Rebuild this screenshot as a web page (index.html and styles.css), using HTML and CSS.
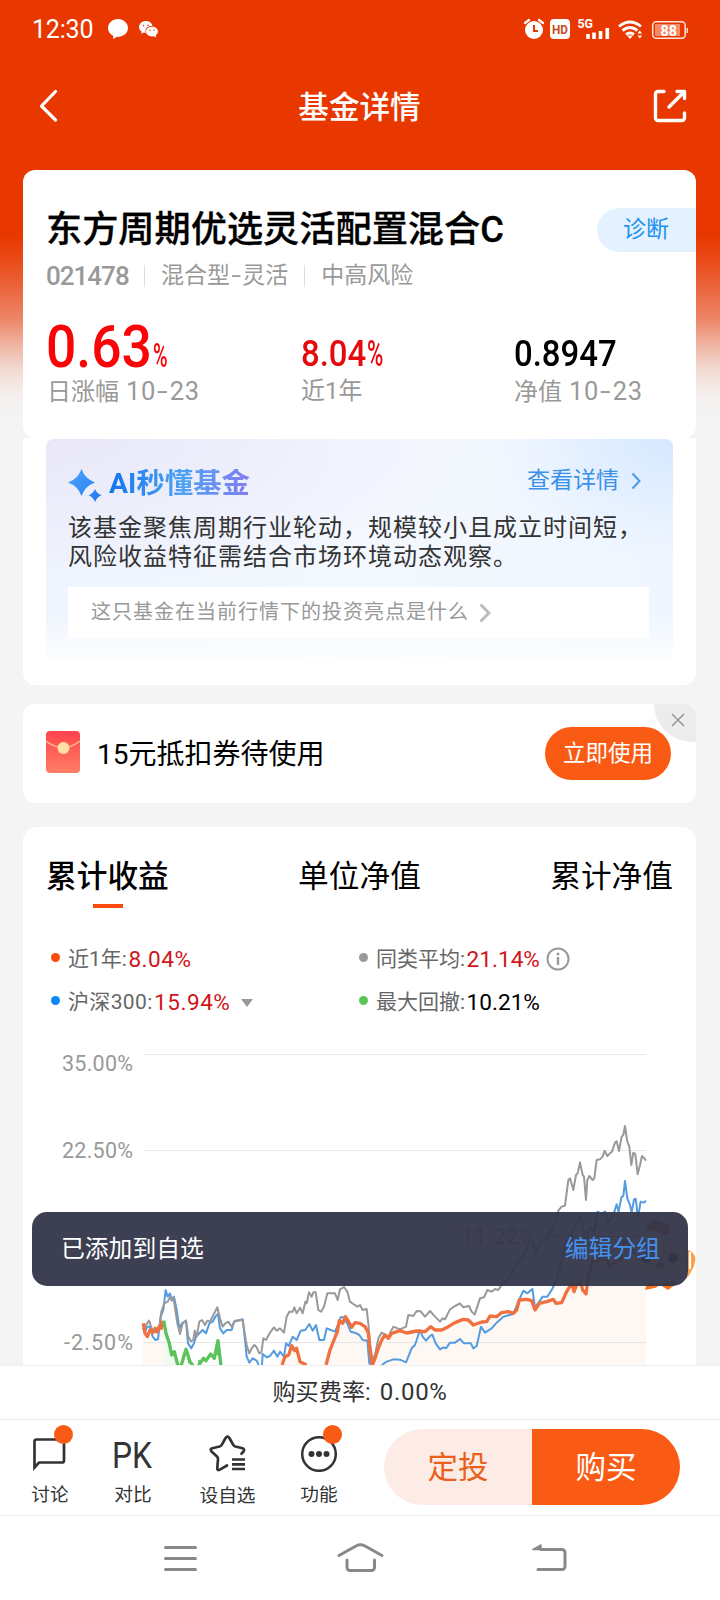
FILE: index.html
```html
<!DOCTYPE html>
<html lang="zh-CN">
<head>
<meta charset="utf-8">
<title>基金详情</title>
<link rel="stylesheet" href="styles.css">
</head>
<body>
<div class="screen">
  <div class="status">
    <div class="status-left">
      <span class="clock">12:30</span>
      <svg class="ic-chat" width="20" height="20" viewBox="0 0 20 20"><path fill="#fff" d="M10 0C4.500 0 0 4 0 9c0 3.600 2.200 6.500 5.400 8L5 20l4.200-2.200C15.500 18 20 14 20 9S15.500 0 10 0z"/></svg>
      <svg class="ic-wechat" width="19" height="17" viewBox="0 0 19 17"><path fill="#fff" d="M7 0C3 0 0 2.700 0 6c0 2 1 3.600 2.700 4.700L2.200 13l2.600-1.400 1.900.3C5.500 7.500 9 4.500 13.600 4.700 12.800 2 10.200 0 7 0z"/><path fill="#fff" d="M13 5.700c-3.300 0-6 2.100-6 4.900s2.700 4.900 6 4.900l2-.3 2.200 1.300-.5-2.100c1.400-1 2.300-2.300 2.300-3.800 0-2.800-2.700-4.900-6-4.900z"/><g fill="#e83800"><circle cx="4.600" cy="4.600" r=".8"/><circle cx="9" cy="4.200" r=".8"/><circle cx="11" cy="9.200" r=".7"/><circle cx="15" cy="9.200" r=".7"/></g></svg>
    </div>
    <svg class="status-icons" width="166" height="32" viewBox="523 12 166 32">
      <circle cx="534" cy="30" r="9" fill="#fff"/><path d="M525 23l4-3M543 23l-4-3" stroke="#fff" stroke-width="2.200" stroke-linecap="round"/><path d="M534 25v6h4" fill="none" stroke="#e83800" stroke-width="2"/>
      <rect x="550" y="19" width="20" height="20" rx="4" fill="#fff"/><text x="552" y="33.800" class="hd" textLength="16" lengthAdjust="spacingAndGlyphs">HD</text>
      <text x="577.500" y="28.300" class="g5" textLength="15.500" lengthAdjust="spacingAndGlyphs">5G</text>
      <path d="M588 39v-5M594 39v-6.500M600.500 39v-8" stroke="#fff" stroke-width="3.600"/><path d="M607.300 39V28" stroke="#fff" stroke-width="3.600"/>
      <g fill="none" stroke="#fff" stroke-width="2.900"><path d="M619 26.500q11-9 22 0M622.500 30.500q7.500-6 15 0M626 34.500q4-3 8 0"/></g><path d="M627 35.500h6L630 39z" fill="#fff"/><path d="M637.500 33.500l2.300-3 2.300 3zM637.500 35.500l2.300 3 2.300-3z" fill="#fff"/>
      <rect x="652.700" y="21.700" width="32.500" height="16.500" rx="3.500" fill="none" stroke="#ffe3d8" stroke-width="1.500"/><rect x="655" y="24" width="25" height="12" fill="#f58a68"/><path d="M687.300 28v5" stroke="#ffe3d8" stroke-width="1.500"/><text x="660.500" y="35.500" class="batt" textLength="16.500" lengthAdjust="spacingAndGlyphs">88</text>
    </svg>
  </div>

  <div class="titlebar">
    <svg width="20" height="34" viewBox="38 89 20 34"><path d="M55.500 91.500L41.500 106l14 14" fill="none" stroke="#fff" stroke-width="3.200" stroke-linecap="round" stroke-linejoin="round"/></svg>
    <h1>基金详情</h1>
    <svg width="34" height="34" viewBox="653 89 34 34" fill="none" stroke="#fff" stroke-width="3.400" stroke-linecap="round" stroke-linejoin="round"><path d="M664 91.500h-6a2.500 2.500 0 0 0-2.500 2.500v24a2.500 2.500 0 0 0 2.500 2.500h24a2.500 2.500 0 0 0 2.500-2.500v-5"/><path d="M669 107l15-15M677 91.500h7.500v7"/></svg>
  </div>

  <div class="card fund">
    <div class="name-row"><h2>东方周期优选灵活配置混合C</h2><span class="tag">诊断</span></div>
    <div class="meta"><span class="code">021478</span><i></i><span>混合型<u>-</u>灵活</span><i></i><span>中高风险</span></div>
    <div class="stats">
      <div class="stat"><div class="value red"><span class="num big">0.63</span><span class="pct small">%</span></div><p>日涨幅 <b>10<u>-</u>23</b></p></div>
      <div class="stat"><div class="value lower red2"><span class="num mid">8.04</span><span class="pct">%</span></div><p>近1年</p></div>
      <div class="stat"><div class="value lower"><span class="num mid">0.8947</span></div><p>净值 <b>10<u>-</u>23</b></p></div>
    </div>
  </div>

  <div class="ai-wrap">
    <div class="ai">
      <div class="ai-head">
        <svg width="34" height="33" viewBox="0 0 34 33"><defs><linearGradient id="spark" x1="0" y1="0" x2="1" y2="1"><stop offset="0" stop-color="#4aa5ff"/><stop offset="1" stop-color="#2478ee"/></linearGradient></defs><path fill="url(#spark)" d="M13.500 0Q17 10 27 13.500 17 17 13.500 27 10 17 0 13.500 10 10 13.500 0zM27 20q2 4.800 6.500 6.300Q29 28 27 33q-2-5-6.500-6.700Q25 24.800 27 20z"/></svg>
        <strong>AI秒懂基金</strong>
        <a>查看详情</a>
        <svg width="10" height="18" viewBox="0 0 10 18"><path d="M1.500 1.500L8.500 9l-7 7.500" fill="none" stroke="#479be9" stroke-width="2"/></svg>
      </div>
      <p class="ai-text">该基金聚焦周期行业轮动，规模较小且成立时间短，<br>风险收益特征需结合市场环境动态观察。</p>
      <div class="ask"><span>这只基金在当前行情下的投资亮点是什么</span><svg width="12" height="20" viewBox="0 0 12 20"><path d="M1.500 1.500L10 10l-8.500 8.500" fill="none" stroke="#bcbcbc" stroke-width="3"/></svg></div>
    </div>
  </div>

  <div class="card coupon">
    <svg width="34" height="43" viewBox="0 0 34 43"><defs><linearGradient id="env" x1="0" y1="0" x2="0" y2="1"><stop offset="0" stop-color="#ff434d"/><stop offset="1" stop-color="#ff7e66"/></linearGradient></defs><rect width="34" height="42" rx="4" fill="url(#env)"/><path d="M0 10q17 13 34 0" fill="none" stroke="#ffb585" stroke-width="1.400"/><circle cx="17.500" cy="17" r="6" fill="#ffe0a0"/></svg>
    <span class="coupon-text">15元抵扣券待使用</span>
    <span class="use">立即使用</span>
    <span class="close"><svg width="14" height="14" viewBox="0 0 14 14"><path d="M1 1l12 12M13 1L1 13" stroke="#999" stroke-width="1.600"/></svg></span>
  </div>

  <div class="card perf">
    <div class="tabs"><span class="on">累计收益</span><span>单位净值</span><span>累计净值</span></div>
    <div class="legend">
      <div><i class="dot orange"></i><span>近1年:</span><b class="wide">8.04%</b></div>
      <div><i class="dot gray"></i><span>同类平均:</span><b>21.14%</b><svg class="info" width="24" height="24" viewBox="0 0 24 24"><circle cx="12" cy="12" r="10.500" fill="none" stroke="#999" stroke-width="2"/><circle cx="12" cy="7" r="1.500" fill="#999"/><path d="M12 10v8" stroke="#999" stroke-width="2.400"/></svg></div>
      <div><i class="dot blue"></i><span class="index">沪深300:</span><b class="wide">15.94%</b><svg class="tri" width="12" height="8" viewBox="0 0 12 8"><path d="M0 0h12L6 8z" fill="#999"/></svg></div>
      <div><i class="dot green"></i><span>最大回撤:</span><b class="black">10.21%</b></div>
    </div>
    <svg class="chart" width="673" height="335" viewBox="23 1030 673 335">
      <g stroke="#e8e8e8" stroke-width="1"><path d="M143 1054.500h503M143 1150.500h503"/></g><path d="M545 1236.500h101" stroke="#aaa"/>
      <g class="axis"><text x="62" y="1071" textLength="71">35.00%</text><text x="62" y="1158" textLength="71">22.50%</text><text x="461" y="1244" textLength="74">11.22%</text><text x="64" y="1349.500" textLength="69">-2.50%</text></g>
      <g transform="translate(120 1110) scale(.33333)" fill="none" stroke-linejoin="round">
        <path fill="#fef8f5" d="M69 640L90 665 131 635V765H69zM131 765H488L515 707 540 755 560 765H618L642 690 658 632 676 620 695 652 745 665 757 765 785 690 815 670 840 662 890 663 965 660 1030 628 1085 636 1190 605 1220 568 1300 570 1355 520 1398 552 1410 470 1578 440V765z"/>
        <path fill="#f1faf0" d="M131 632L148 700 172 765H131z"/>
        <path d="M69 697.500H1578" stroke="#e9e5e4" stroke-width="3"/>
        <path stroke="#549bdf" stroke-width="6" d="M69 655L75 665 82 650 90 650 98 680 106 690 114 688 122 620 130 600 137 540 143 560 150 550 156 572 162 560 170 600 178 655 186 640 198 632 204 700 214 715 222 700 228 680 238 670 248 660 258 670 268 640 278 635 286 620 294 612 300 655 310 670 320 660 335 660 342 635 368 628 374 680 380 740 388 758 398 745 410 752 416 765M426 765L428 732 440 742 450 738 462 722 472 740 480 725 492 740 498 700 506 708 518 680 530 690 542 662 556 660 568 642 578 662 588 645 598 690 612 690 620 655 632 660 645 665 656 640 662 622 672 622 684 645 692 665 705 668 718 675 728 690 742 692 748 760 756 765M785 765L800 755 820 748 840 749 858 757 875 715 885 705 900 660 908 680 918 692 930 678 937 674 947 700 960 718 970 712 978 715 990 698 1005 698 1020 687 1032 700 1052 700 1060 715 1070 708 1083 650 1095 668 1115 655 1130 638 1150 620 1180 612 1195 575 1210 542 1222 550 1237 537 1245 592 1258 575 1268 560 1282 560 1295 540 1310 510 1325 450 1340 390 1355 370 1380 320 1390 360 1398 400 1410 350 1422 370 1432 305 1445 312 1455 305 1465 335 1480 315 1490 283 1496 305 1504 262 1510 258 1515 213 1522 265 1530 285 1535 308 1542 268 1547 266 1554 323 1562 275 1572 278 1578 272"/>
        <path stroke="#999" stroke-width="6" d="M69 660L75 650 87 632 95 655 108 668 118 655 124 605 133 580 143 575 150 562 155 570 160 562 166 600 172 640 180 672 188 640 198 632 205 680 213 694 220 690 224 662 230 680 238 635 246 630 255 645 262 632 270 635 280 615 292 592 300 625 308 650 316 640 325 635 335 650 345 632 368 630 374 670 380 705 388 730 395 715 403 705 410 712 418 730 424 728 430 685 438 690 450 668 462 652 470 662 480 655 492 668 500 620 508 605 518 605 523 592 530 610 540 593 548 610 556 575 560 580 567 547 575 560 580 547 587 547 595 600 603 605 612 590 622 550 645 550 653 570 660 538 672 531 682 545 690 575 700 582 712 590 720 585 728 600 740 597 745 640 750 700 757 750 765 735 775 685 785 668 797 675 805 682 812 665 820 650 840 658 858 650 865 615 880 618 890 603 902 604 915 620 930 603 945 620 960 635 968 625 975 628 990 598 1005 588 1020 580 1030 592 1047 588 1055 605 1064 614 1075 580 1080 565 1092 562 1102 540 1115 545 1125 537 1135 540 1145 525 1170 500 1185 470 1200 450 1215 430 1228 395 1240 400 1245 430 1260 400 1272 395 1280 385 1295 360 1302 345 1315 302 1325 290 1335 287 1345 210 1350 205 1360 240 1368 195 1373 190 1380 157 1388 195 1392 200 1398 270 1402 210 1408 198 1418 210 1423 205 1430 150 1440 148 1448 140 1454 122 1462 138 1470 130 1476 125 1485 98 1490 94 1497 123 1505 80 1510 75 1515 48 1522 95 1528 110 1534 165 1540 128 1546 132 1553 193 1560 165 1566 138 1573 145 1578 152"/>
        <path stroke="#f07040" stroke-width="10" d="M70 640L75 670 82 680 90 660 98 668 106 655 112 665 118 648 124 655 126 632M486 765L495 740 506 735 515 707 524 722 530 715 540 755 560 765M618 765L630 720 642 690 652 665 658 632 668 640 676 620 686 635 695 652 705 638 720 640 735 650 745 668 750 720 757 765 765 745 775 715 785 690 795 675 805 685 815 670 840 662 860 669 890 663 915 665 932 650 945 660 965 660 985 650 1005 638 1020 632 1030 628 1045 630 1060 645 1085 636 1100 635 1110 618 1130 620 1145 608 1165 605 1180 610 1190 600 1198 570 1220 568 1235 572 1245 600 1258 580 1280 575 1300 568 1308 580 1325 578 1340 545 1355 520 1362 545 1370 525 1382 518 1388 540 1398 552 1405 500 1420 445 1435 455 1455 440 1470 470 1480 460 1500 450 1515 390 1535 420 1555 440 1578 420"/>
        <path stroke="#5cc35b" stroke-width="10" d="M131 632L138 670 148 700 155 735 163 725 172 760 175 768M183 768L198 718 210 755 220 768M235 768L250 745 258 752 272 732 283 745 294 692 303 768"/>
        <path stroke="#5cc35b" stroke-width="5" d="M187 760L190 735M207 760L204 735M237 763V750M291 735V710M296 740V705"/>
      </g>
    </svg>
  </div>

  <div class="fee"><span>购买费率:</span><span class="rate">0.00%</span></div>
  <div class="actions">
    <div class="act"><svg width="40" height="52" viewBox="31 1420 40 52"><path d="M37.500 1439.500h25.500a2 2 0 0 1 2 2v19a2 2 0 0 1-2 2H40l-4.500 5v-26a2 2 0 0 1 2-2z" fill="none" stroke="#333" stroke-width="2.700"/></svg><em class="badge"></em><span>讨论</span></div>
    <div class="act"><svg width="60" height="52" viewBox="103.500 1420 60 52"><text x="112.500" y="1468" class="pk" textLength="40" lengthAdjust="spacingAndGlyphs">PK</text></svg><span>对比</span></div>
    <div class="act third"><svg width="40" height="52" viewBox="207.500 1420 40 52"><path d="M226.500 1465.500l-7.500 4.300q-2.500 1-2.200-2l.7-8.500q.1-1.600-1-2.800l-5.500-5q-2-2.500.8-3.300l7.300-1.700q1.500-.4 2.300-1.800l3.700-6.700q1.900-2.600 3.800 0l3.700 6.700q.7 1.400 2.200 1.800l7.300 1.700q2.500 1 .9 3.300l-2 2.200" fill="none" stroke="#333" stroke-width="2.700" stroke-linecap="round" stroke-linejoin="round"/><path d="M231.500 1459.500h13M231.500 1464.300h13M231.500 1469h13" stroke="#333" stroke-width="2.700"/></svg><span>设自选</span></div>
    <div class="act"><svg width="40" height="52" viewBox="299 1420 40 52"><circle cx="319" cy="1454" r="16.800" fill="none" stroke="#333" stroke-width="2.500"/><g fill="#333"><circle cx="311.500" cy="1454" r="3"/><circle cx="319" cy="1454" r="3"/><circle cx="326.500" cy="1454" r="3"/></g></svg><em class="badge"></em><span>功能</span></div>
    <div class="buy"><span class="plan">定投</span><span class="now">购买</span></div>
  </div>
  <div class="nav">
    <svg width="403" height="36" viewBox="164 1540 403 36" fill="none" stroke="#888" stroke-width="3" stroke-linecap="round" stroke-linejoin="round"><path d="M165.500 1547.500h30M165.500 1558.500h30M165.500 1569.500h30"/><path d="M339 1555.500l17-9.500q4.500-2.300 9 0l17 9.500M347 1560v7.500a3 3 0 0 0 3 3h21.500a3 3 0 0 0 3-3v-7.500"/><path d="M541 1549.500h21a3 3 0 0 1 3 3v14a3 3 0 0 1-3 3h-24"/><path d="M533 1549.500l8-4.500v4.500z" fill="#888" stroke-width="1.500"/></svg>
  </div>

  <svg class="mascot" width="64" height="74" viewBox="634 1218 64 74"><path d="M647 1283l-2 7 10-2 5-3 8 5 8-6-3-5z" fill="#fb7419"/><circle cx="660" cy="1257" r="27" fill="#f8ece1"/><path d="M646 1230q6-15 15-8 12 0 8 13z" fill="#ec5a31"/><path d="M686 1249q9 3 9.500 10-1 10-9.500 20z" fill="#f8a14c"/><path d="M690 1252v17" stroke="#fff" stroke-width="2"/><circle cx="646" cy="1258" r="5" fill="#345"/><circle cx="673" cy="1258" r="5" fill="#345"/><path d="M653 1266l7-4 7 4-7 4z" fill="#e96332"/></svg>
  <div class="toast"><span>已添加到自选</span><a>编辑分组</a></div>
</div>
</body>
</html>
```

FILE: styles.css
```css
* { box-sizing: border-box; margin: 0; padding: 0; }
body { font-family: Roboto, "Noto Sans CJK SC", sans-serif; color: #000; width: 720px; height: 1600px; overflow: hidden; }
svg { display: block; flex: none; }
i, em { font-style: normal; display: block; }
u { display: inline-block; text-decoration: none; transform: scaleX(1.5); margin: 0 3px; }
.screen {
  position: relative; width: 720px; height: 1600px; overflow: hidden;
  display: flex; flex-direction: column;
  background: linear-gradient(#e83800 0, #e83800 236px, #e94c1b 262px, #ea6840 290px, #ec8768 320px, #f0b5a3 345px, #f2dbd3 370px, #f4efed 395px, #f4f4f4 415px);
}
.screen > * { flex: none; }

.status { height: 58px; padding: 0 31px 0 32px; display: flex; justify-content: space-between; }
.status-left { display: flex; color: #fff; }
.clock { width: 76px; font-size: 25px; line-height: 59px; letter-spacing: -.2px; }
.ic-chat { margin-top: 19px; }
.ic-wechat { margin: 21px 0 0 11px; }
.status-icons { margin-top: 12px; }
.hd { font-size: 13px; font-weight: 700; fill: #c74a25; }
.g5 { font-size: 12.500px; font-weight: 700; fill: #fff; }
.batt { font-size: 14px; font-weight: 700; fill: #fff; }

.titlebar { height: 112px; padding: 31px 33px 0 38px; display: flex; justify-content: space-between; align-items: flex-start; }
.titlebar h1 { color: #fff; font-size: 30.600px; font-weight: 500; line-height: 37px; margin-left: 8px; }

.card { width: 673px; margin-left: 23px; background: #fff; border-radius: 12px; }
.fund { height: 268px; padding: 38px 0 0 23px; }
.name-row { display: flex; justify-content: space-between; height: 45px; }
.name-row h2 { font-size: 36.200px; font-weight: 500; line-height: 44px; white-space: nowrap; -webkit-text-stroke: .3px #000; }
.tag { width: 99px; height: 44px; padding-left: 26px; border-radius: 22px 0 0 22px; background: #e3f2fe; color: #1d91ee; font-size: 23px; line-height: 44px; }
.meta { display: flex; align-items: center; height: 46px; color: #999; font-size: 23px; line-height: 46px; }
.meta .code { width: 82px; font-size: 26px; font-weight: 500; letter-spacing: -1px; }
.meta i { width: 1px; height: 22px; background: #ddd; margin: 0 16px 0 16px; }
.stats { display: grid; grid-template-columns: 254px 213px auto; margin-top: 17px; padding-left: 1px; }
.value { display: flex; align-items: baseline; height: 60px; line-height: 62px; }
.value.lower { padding-top: 7px; }
.num { display: block; transform-origin: 0 100%; font-weight: 500; }
.big { width: 105px; margin-left: -1px; font-size: 60px; transform: scaleX(.89); }
.mid { width: 66px; font-size: 37px; transform: scaleX(.89); }
.pct { display: block; font-size: 37px; font-weight: 500; transform: scaleX(.6); transform-origin: 0 100%; }
.pct.small { font-size: 33px; width: 16px; margin-left: 2px; padding-top: 4px; }
.red { color: #f90507; }
.red2 { color: #e50a0d; }
.stat p { color: #999; font-size: 24px; line-height: 30px; white-space: nowrap; }
.stat b { font-weight: 400; font-size: 25.500px; letter-spacing: .7px; margin-left: 1px; }

.ai-wrap { width: 673px; height: 247px; margin-left: 23px; padding: 1px 23px 0; background: #fff; border-radius: 0 0 12px 12px; }
.ai {
  height: 223px; padding: 30px 24px 0 22px; border-radius: 8px;
  background:
    linear-gradient(transparent 78%, rgba(255,255,255,.85) 100%),
    radial-gradient(ellipse 180px 120px at 100% 0, #d6e8ff, rgba(214,232,255,0) 100%),
    radial-gradient(ellipse 420px 150px at 0 0, #e9e7f8, rgba(233,231,248,0) 100%),
    linear-gradient(90deg, #eff5fe, #f4f8ff 50%, #eff6ff);
}
.ai-head { display: flex; height: 40px; }
.ai-head strong { margin-left: 7px; font-size: 28.400px; line-height: 30px; height: 34px; background: linear-gradient(90deg, #1275ee, #4fa3f3 52%, #827df3); -webkit-background-clip: text; color: transparent; }
.ai-head a { margin-left: auto; font-size: 23px; line-height: 24px; color: #3b91e8; }
.ai-head > svg:last-child { margin: 3px 8px 0 12px; }
.ai-text { height: 78px; padding-top: 5px; color: #333; font-size: 24px; letter-spacing: 1px; line-height: 29px; white-space: nowrap; }
.ask { height: 51px; background: #fff; padding-left: 23px; display: flex; align-items: center; color: #999; font-size: 20px; line-height: 24px; letter-spacing: 1px; }
.ask span { margin-top: -1px; }
.ask svg { margin-left: 10px; }

.coupon { position: relative; height: 99px; margin-top: 19px; padding: 0 25px 0 23px; display: flex; align-items: center; }
.coupon > svg { margin-top: -2px; }
.coupon-text { margin: -4px 0 0 17px; font-size: 28px; }
.use { margin-left: auto; width: 126px; height: 53px; border-radius: 27px; background: #fa5b14; color: #fff; font-size: 22.500px; line-height: 53px; text-align: center; }
.close { position: absolute; right: 0; top: 0; width: 42px; height: 38px; background: #ececec; border-radius: 0 12px 0 38px; padding: 9px 0 0 17px; }

.perf { height: 538px; margin-top: 24px; border-radius: 14px 14px 0 0; }
.tabs { height: 111px; padding: 29px 23px 0; display: flex; justify-content: space-between; font-size: 30.700px; line-height: 41px; }
.tabs .on { height: 54px; font-weight: 500; background: linear-gradient(#fa4b0d, #fa4b0d) 47px 48px / 30px 4px no-repeat; }
.legend { display: grid; grid-template-columns: 308px auto; grid-template-rows: 43px 43px; padding-left: 27px; color: #666; font-size: 21px; line-height: 43px; }
.legend > div { display: flex; }
.legend b { color: #cf1519; font-weight: 400; font-size: 22.600px; margin-left: 1.500px; }
.legend b.wide { letter-spacing: .5px; }
.legend b.black { color: #000; }
.legend .index { letter-spacing: .35px; }
.dot { width: 9px; height: 9px; border-radius: 50%; margin: 15px 8px 0 1px; }
.orange { background: #fa4b0d; } .gray { background: #999; } .blue { background: #0a88f5; } .green { background: #5cc35b; }
.info { margin: 9px 0 0 6px; }
.tri { margin: 18px 0 0 11px; }
.chart { margin-top: 6px; }
.axis { font-size: 21.500px; fill: #999; }

.fee { height: 55px; background: #fff; border-top: 1px solid #eee; border-bottom: 1px solid #eaeaea; display: flex; justify-content: center; gap: 9px; color: #333; font-size: 23.200px; line-height: 53px; }
.rate { font-size: 24px; letter-spacing: .7px; }
.actions { height: 96px; background: #fff; border-bottom: 1px solid #f0f0f0; display: grid; grid-template-columns: 66px 100px 89px 94px auto; padding-left: 17px; }
.act { position: relative; display: flex; flex-direction: column; align-items: center; color: #333; font-size: 18.700px; line-height: 24px; white-space: nowrap; }
.act svg { margin-bottom: 11px; }
.act.third svg { margin-bottom: 12px; }
.pk { font-size: 36px; fill: #333; }
.badge { position: absolute; top: 5px; left: 50%; margin-left: 4px; width: 19px; height: 19px; border-radius: 50%; background: #fa5b14; }
.buy { display: flex; width: 296px; height: 76px; margin: 9px 0 0 18px; border-radius: 38px; overflow: hidden; font-size: 30.500px; line-height: 78px; text-align: center; }
.buy span { width: 148px; }
.plan { background: #fcece5; color: #ea601b; }
.now { background: #fa5b14; color: #fff; }
.nav { height: 84px; background: #fff; padding: 24px 0 0 164px; }

.screen > .mascot { position: absolute; left: 634px; top: 1218px; }
.toast { position: absolute; left: 32px; top: 1212px; width: 656px; height: 74px; border-radius: 15px; background: rgba(50,53,72,.945); display: flex; justify-content: space-between; padding: 0 28px 0 29px; color: #fff; font-size: 23.800px; line-height: 75px; }
.toast a { color: #4690ee; }
```
